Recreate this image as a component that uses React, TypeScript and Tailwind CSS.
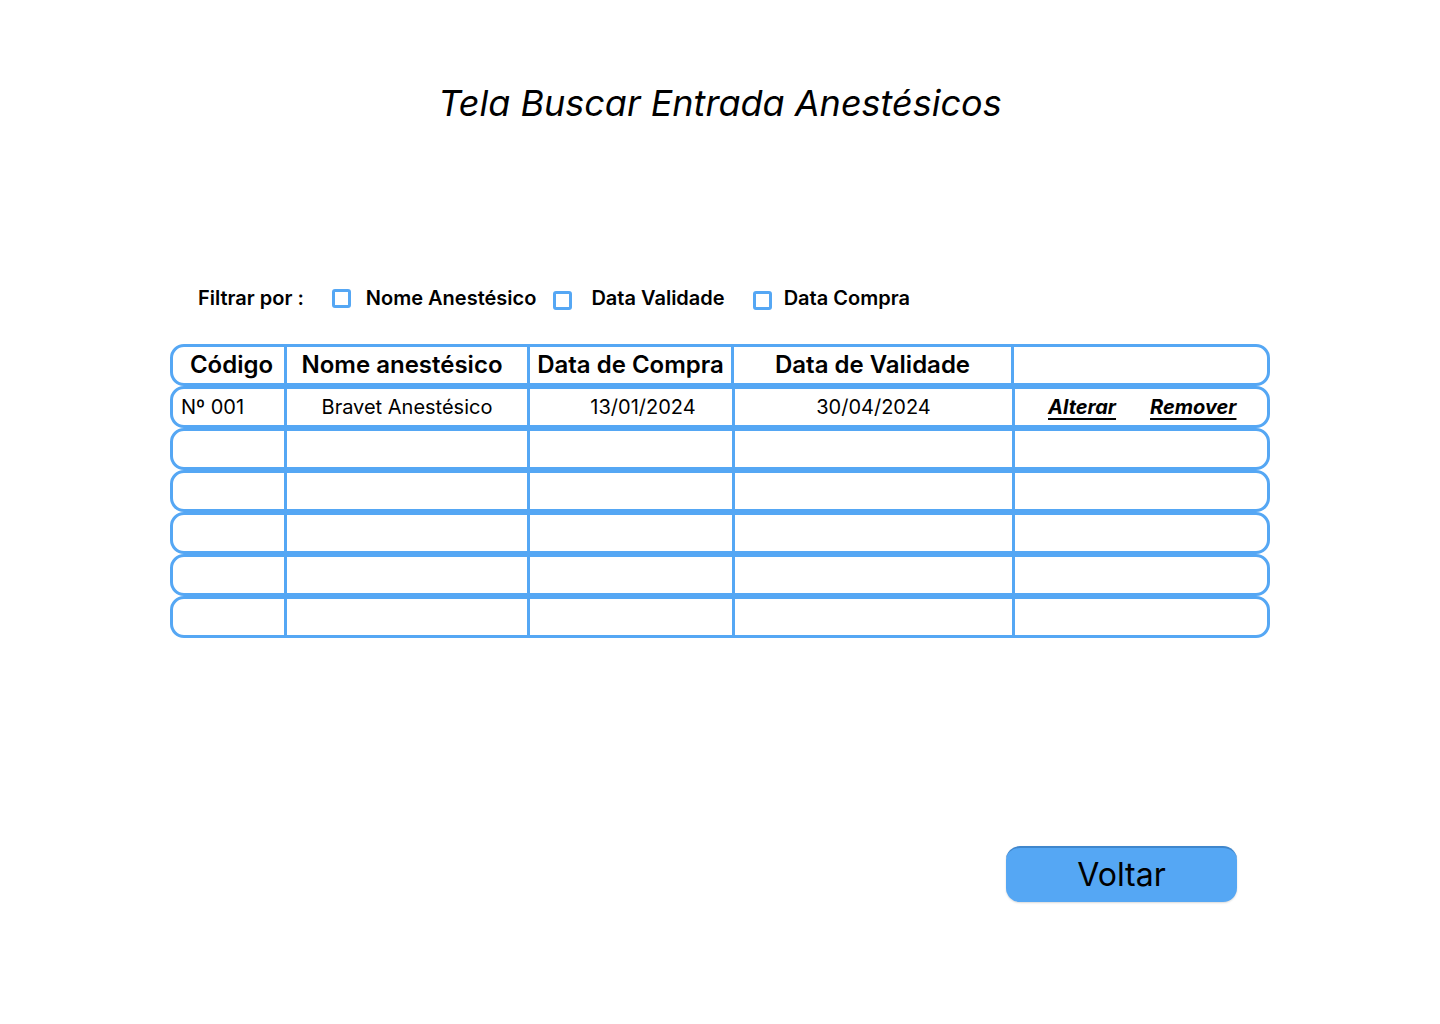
const rows = [
  { codigo: "Nº 001", nome: "Bravet Anestésico", compra: "13/01/2024", validade: "30/04/2024", acoes: true },
  { codigo: "", nome: "", compra: "", validade: "", acoes: false },
  { codigo: "", nome: "", compra: "", validade: "", acoes: false },
  { codigo: "", nome: "", compra: "", validade: "", acoes: false },
  { codigo: "", nome: "", compra: "", validade: "", acoes: false },
  { codigo: "", nome: "", compra: "", validade: "", acoes: false },
];

function Checkbox() {
  return <span className="block w-[19px] h-[19px] rounded-[3px] border-[3px] border-[#55a7f4] bg-white" />;
}

export default function App() {
  return (
    <div className="w-[1440px] h-[1024px] bg-white text-black font-['Inter','Noto_Sans',sans-serif] flex flex-col">
      {/* Título */}
      <h1 className="pt-[81px] text-center text-[36px] leading-[44px] italic font-normal">
        Tela Buscar Entrada Anestésicos
      </h1>

      {/* Filtros */}
      <div className="mt-[161px] flex items-center h-[24px] text-[20px] font-semibold">
        <span className="ml-[198px]">Filtrar por :</span>
        <span className="ml-[28px]"><Checkbox /></span>
        <span className="ml-[15px]">Nome Anestésico</span>
        <span className="ml-[17px] mt-[4px]"><Checkbox /></span>
        <span className="ml-[19px]">Data Validade</span>
        <span className="ml-[28px] mt-[4px]"><Checkbox /></span>
        <span className="ml-[12px]">Data Compra</span>
      </div>

      {/* Tabela */}
      <div className="mt-[34px] ml-[170px] w-[1100px] flex flex-col">
        <div className="flex h-[42px] border-[3px] border-[#55a7f4] rounded-[14px] text-[24px] font-semibold">
          <div className="w-[114px] border-r-[3px] border-[#55a7f4] flex items-center justify-center pl-[6px]">Código</div>
          <div className="w-[243px] border-r-[3px] border-[#55a7f4] flex items-center justify-center pr-[10px]">Nome anestésico</div>
          <div className="w-[204px] border-r-[3px] border-[#55a7f4] flex items-center justify-center">Data de Compra</div>
          <div className="w-[280px] border-r-[3px] border-[#55a7f4] flex items-center justify-center">Data de Validade</div>
          <div className="flex-1" />
        </div>
        {rows.map((r, i) => (
          <div key={i} className="flex h-[42px] border-[3px] border-[#55a7f4] rounded-[14px] text-[20px]">
            <div className="w-[114px] border-r-[3px] border-[#55a7f4] flex items-center pl-[8px]">{r.codigo}</div>
            <div className="w-[243px] border-r-[3px] border-[#55a7f4] flex items-center justify-center">{r.nome}</div>
            <div className="w-[205px] border-r-[3px] border-[#55a7f4] flex items-center justify-center pl-[24px]">{r.compra}</div>
            <div className="w-[280px] border-r-[3px] border-[#55a7f4] flex items-center justify-center">{r.validade}</div>
            <div className="flex-1 flex items-center text-[20px] font-bold italic">
              {r.acoes && (
                <>
                  <a className="ml-[33px] underline underline-offset-[4px]">Alterar</a>
                  <a className="ml-[34px] underline underline-offset-[4px]">Remover</a>
                </>
              )}
            </div>
          </div>
        ))}
      </div>

      {/* Botão */}
      <div className="mt-[208px] ml-[1006px]">
        <button className="w-[231px] h-[56px] rounded-[14px] bg-[#55a7f4] border-t-[2px] border-[#3f86cc] shadow-[0_1px_2px_rgba(0,0,0,0.15)] text-[32px] leading-none text-black">
          Voltar
        </button>
      </div>
    </div>
  );
}
